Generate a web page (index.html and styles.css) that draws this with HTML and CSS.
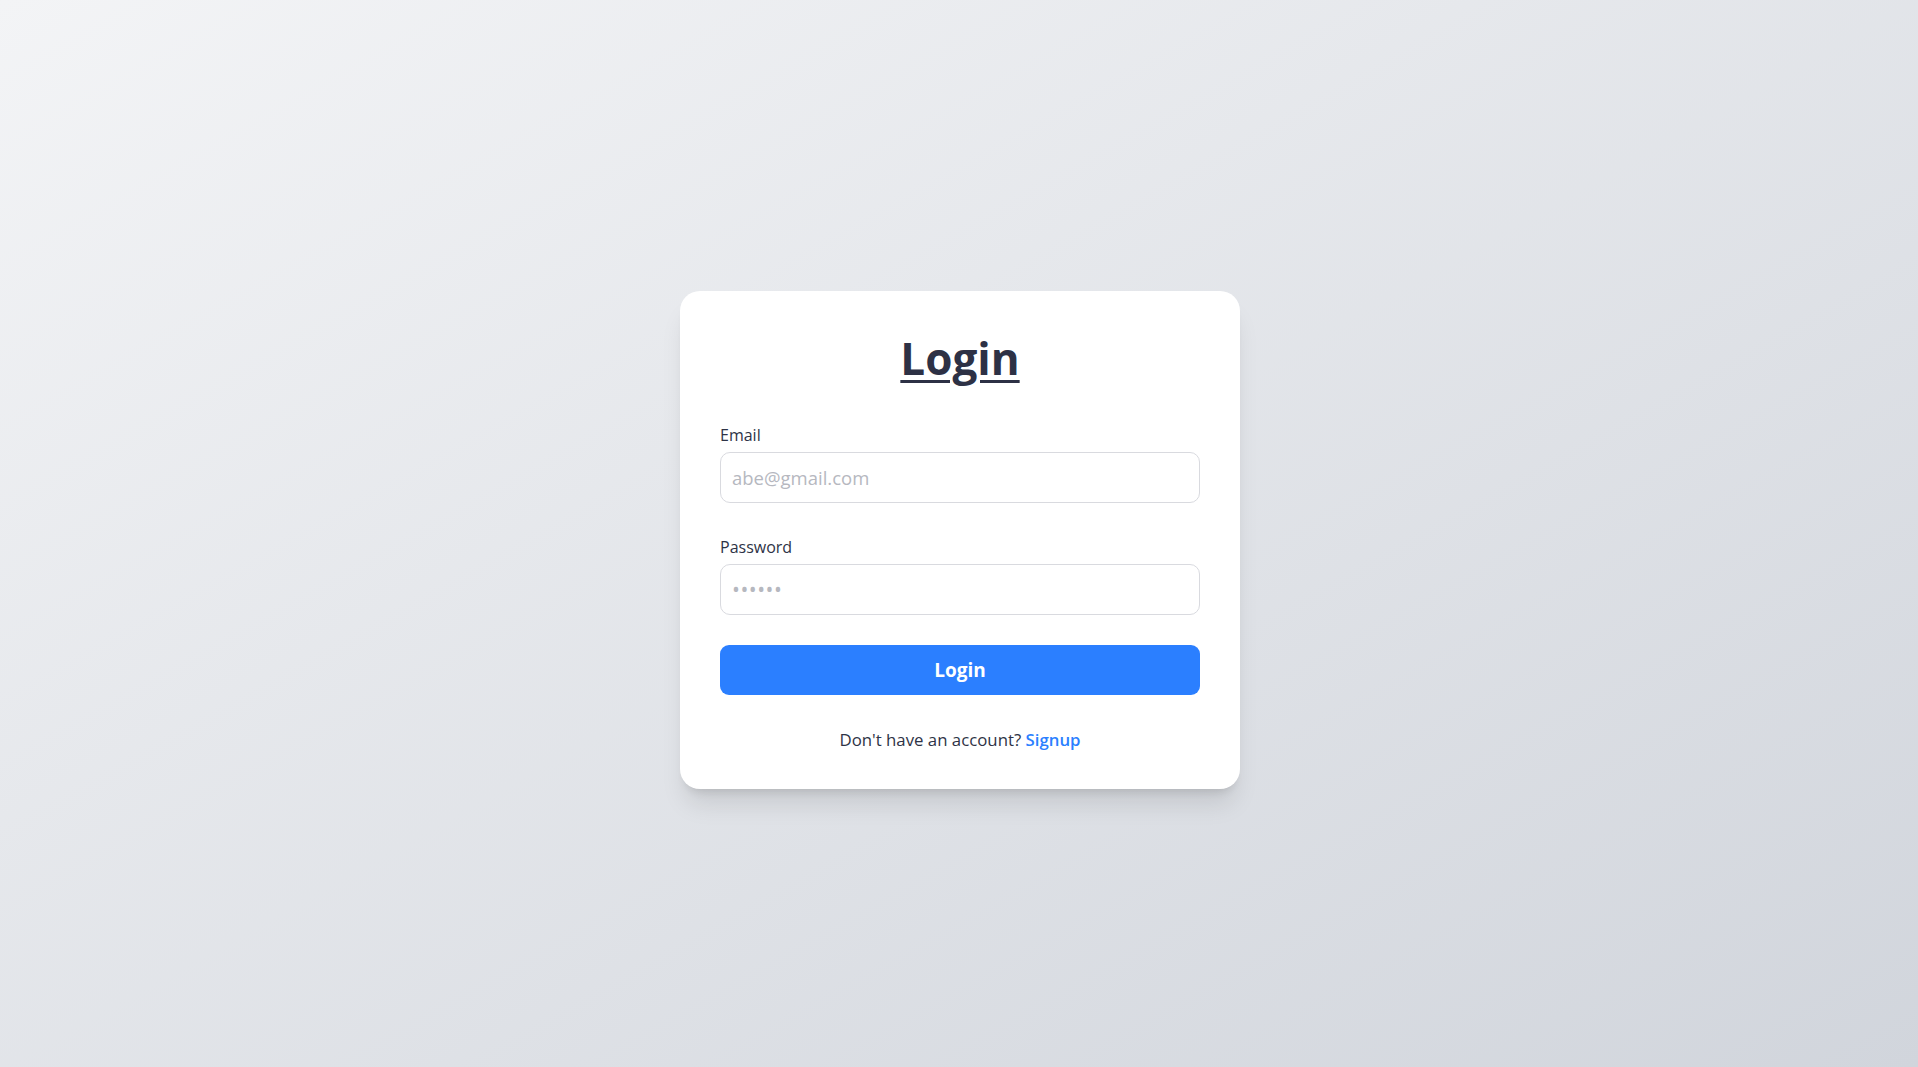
FILE: index.html
```html
<!DOCTYPE html>
<html lang="en">
<head>
<meta charset="utf-8">
<title>Login</title>
<link rel="stylesheet" href="styles.css">
</head>
<body>
<main class="page">
  <form class="card">
    <h1 class="title">Login</h1>
    <div class="field">
      <label class="label" for="email">Email</label>
      <input class="input" id="email" type="email" placeholder="abe@gmail.com">
    </div>
    <div class="field">
      <label class="label" for="password">Password</label>
      <input class="input input-pass" id="password" type="password" placeholder="••••••">
    </div>
    <button class="btn" type="button">Login</button>
    <p class="foot">Don't have an account? <a class="link" href="#">Signup</a></p>
  </form>
</main>
</body>
</html>
```
FILE: styles.css
```css
* { box-sizing: border-box; }
html, body { margin: 0; padding: 0; height: 100%; }
body {
  font-family: "Open Sans", "Noto Sans", sans-serif;
  color: #2e3346;
  background: linear-gradient(to bottom right, #f3f4f6, #d1d5dc);
}
.page {
  min-height: 100vh;
  display: flex;
  align-items: center;
  justify-content: center;
  padding-top: 13px;
  padding-left: 2px;
}
.card {
  width: 560px;
  background: #ffffff;
  border-radius: 20px;
  padding: 41px 40px 37px;
  box-shadow: 0 20px 25px -5px rgba(0,0,0,0.10), 0 8px 10px -6px rgba(0,0,0,0.12);
}
.title {
  margin: 0 0 39px;
  text-align: center;
  font-size: 44px;
  line-height: 52px;
  font-weight: 700;
  color: #2d3145;
  text-decoration: underline;
  text-decoration-thickness: 3px;
  text-underline-offset: 5px;
}
.field { margin-bottom: 32px; }
.field + .btn { margin-top: -2px; }
.label {
  display: block;
  font-size: 16px;
  line-height: 24px;
  color: #2e3346;
  margin-bottom: 5px;
}
.input {
  display: block;
  width: 100%;
  height: 51px;
  border: 1px solid #d9dadf;
  border-radius: 10px;
  padding: 0 11px;
  font-family: inherit;
  font-size: 18.5px;
  color: #2e3346;
  background: #fff;
  outline: none;
}
.input::placeholder { color: #b6b8bf; }
.input-pass::placeholder { font-size: 21px; letter-spacing: 0.5px; }
.btn {
  display: block;
  width: 100%;
  height: 50px;
  border: none;
  border-radius: 9px;
  background: #2b7fff;
  color: #fff;
  font-family: inherit;
  font-size: 19px;
  font-weight: 700;
  cursor: pointer;
}
.foot {
  margin: 33px 0 0;
  text-align: center;
  font-size: 16.8px;
  line-height: 24px;
  color: #2e3346;
}
.link {
  color: #2b7fff;
  font-weight: 600;
  text-decoration: none;
}
```
